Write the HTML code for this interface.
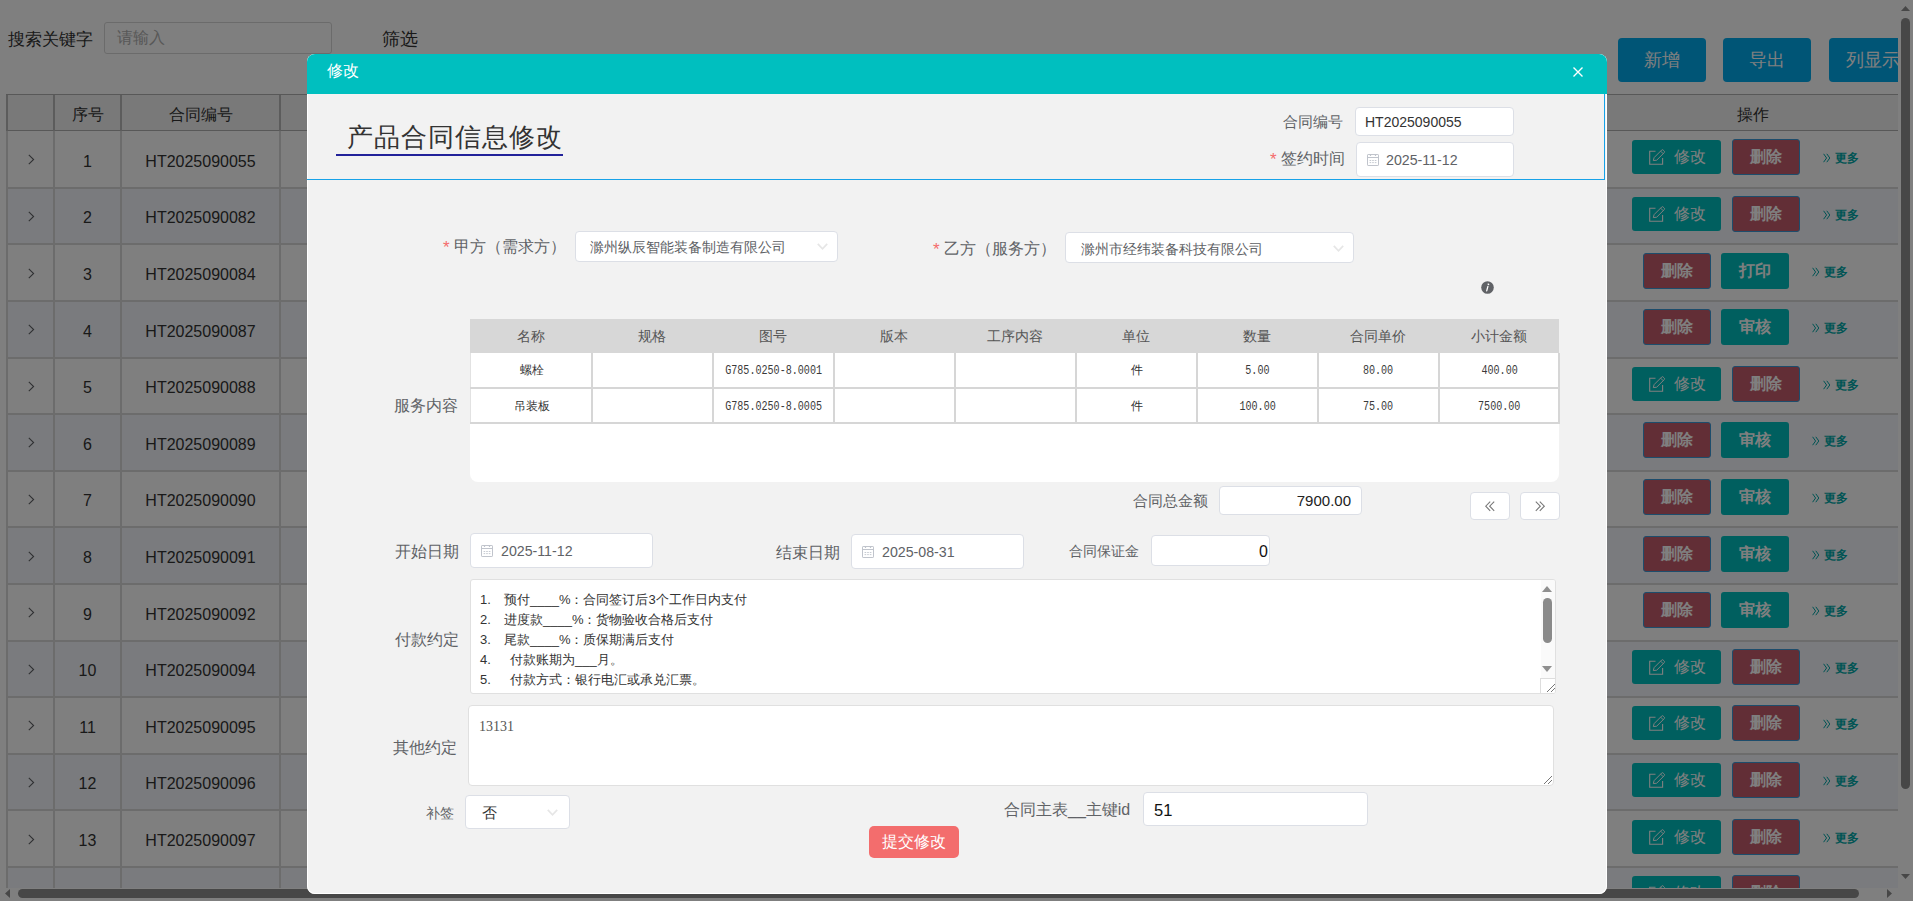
<!DOCTYPE html>
<html><head><meta charset="utf-8"><title>修改</title>
<style>
html,body{margin:0;padding:0;width:1913px;height:901px;overflow:hidden;background:#fff;font-family:"Liberation Sans",sans-serif;color:#333}
.a{position:absolute}
#page{position:absolute;left:0;top:0;width:1913px;height:901px;overflow:hidden;background:#fff}
.row{position:absolute;left:6px;width:1892px}
.cell{position:absolute;display:flex;align-items:center;justify-content:center;font-size:16px;color:#333}
.chev{font-size:20px;color:#666;margin-top:-3px}
.vl{position:absolute;top:95px;height:800px;width:2px;background:#d8d8d8}.vlh{position:absolute;top:95px;height:36px;width:2px;background:#b8b8b8}
.hl{position:absolute;left:6px;width:1892px;height:2px;background:#d8d8d8}
.btn{position:absolute;color:#fff;font-size:16px;text-align:center;border-radius:3px}
.teal{background:#00bfbf}
.del{background:#c45c6c;border:1px solid #3a9ad9;box-sizing:border-box;font-weight:bold}
.b{font-weight:bold}
.more{position:absolute;font-size:12px;line-height:18px;color:#00a8a8;white-space:nowrap}
.more b{margin-left:4px}.more svg{vertical-align:-1px}
.topbtn{position:absolute;top:38px;height:44px;line-height:45px;background:#01AAED;color:#fff;font-size:18px;text-align:center;border-radius:4px}
#shade{position:absolute;left:0;top:0;width:1913px;height:901px;background:rgba(0,0,0,.5)}
#modal{position:absolute;left:307px;top:54px;width:1300px;height:840px;background:#f2f2f2;border-radius:8px;overflow:hidden;box-shadow:0 0 0 1px #fff inset}
#mhead{position:absolute;left:0;top:0;width:1300px;height:40px;background:#00bfbf}
.lbl{position:absolute;font-size:15px;color:#606266;white-space:nowrap;line-height:20px}
.req{color:#f56c6c;margin-right:4px}
.inp{position:absolute;background:#fff;border:1px solid #dcdfe6;border-radius:4px;box-sizing:border-box;white-space:nowrap;overflow:hidden}
.inp .t{position:absolute;white-space:nowrap}
.cal{position:absolute;left:10px;top:10px}
.sth{position:absolute;top:319px;height:34px;line-height:34px;text-align:center;font-size:14px;color:#555;background:#d7d7d7}
.std{position:absolute;height:34px;line-height:34px;text-align:center;font-size:12px;color:#333}
.mono{font-family:"Liberation Mono",monospace;font-size:12px;color:#3a3a3a}.mono span{display:inline-block;transform:scaleX(0.84);position:relative;top:1px}
.ta{position:absolute;white-space:pre;font-size:13px;line-height:20px;color:#333}
</style></head><body>
<div id="page">
  <div class="a" style="left:8px;top:30px;font-size:17px;line-height:20px;color:#333">搜索关键字</div>
  <div class="a" style="left:104px;top:22px;width:228px;height:32px;box-sizing:border-box;border:1px solid #d6d6d6;border-radius:3px"></div>
  <div class="a" style="left:117px;top:29px;font-size:15.5px;line-height:18px;color:#b0b0b0">请输入</div>
  <div class="a" style="left:382px;top:29px;font-size:18px;line-height:20px;color:#333">筛选</div>
  <div class="topbtn" style="left:1618px;width:88px">新增</div>
  <div class="topbtn" style="left:1723px;width:88px">导出</div>
  <div class="a" style="left:1829px;top:38px;width:69px;height:44px;overflow:hidden"><div class="topbtn" style="left:0;top:0;width:88px;border-radius:4px 0 0 4px;text-align:left;text-indent:17px">列显示</div></div>
  <div class="a" style="left:6px;top:94px;width:1892px;height:37px;background:#f2f2f2;box-sizing:border-box;border-top:1.5px solid #b0b0b0;border-bottom:1.5px solid #b0b0b0"></div>
  <div class="cell" style="left:54px;width:67px;top:97px;height:36px">序号</div>
  <div class="cell" style="left:121px;width:159px;top:97px;height:36px">合同编号</div>
  <div class="cell" style="left:1607px;width:291px;top:97px;height:36px">操作</div>
  <div class="row" style="top:131.100px;height:56.600px;background:#ffffff"></div><div class="cell" style="left:6px;width:48px;top:131.100px;height:56.600px"><svg width="7" height="11" viewBox="0 0 7 11" style="margin-left:2px;margin-top:1px"><path d="M0.8 0.8L5.6 5.5L0.8 10.2" fill="none" stroke="#606266" stroke-width="1.1"/></svg></div><div class="cell" style="left:54px;width:67px;top:133.600px;height:56.600px">1</div><div class="cell" style="left:121px;width:159px;top:133.600px;height:56.600px">HT2025090055</div><div class="btn teal" style="left:1632px;top:140.40px;width:89px;height:34px"><svg width="18" height="17" viewBox="0 0 18 17" style="position:absolute;left:16px;top:9px"><path d="M7.5 2.3H1.7V15.2H14.6V9" fill="none" stroke="#fff" stroke-width="1.1"/><path d="M5.3 11.6L6.1 8.6L13.7 1Q14.4 0.3 15.1 1L16.3 2.2Q17 2.9 16.3 3.6L8.7 11.2Z" fill="none" stroke="#fff" stroke-width="1" stroke-linejoin="round"/><path d="M12.6 2.1L15.2 4.7" stroke="#fff" stroke-width="1"/></svg><span style="position:absolute;left:42px;top:0;line-height:34px">修改</span></div><div class="btn del" style="left:1732px;top:139.40px;width:68px;height:36px;line-height:34px">删除</div><div class="more" style="left:1823px;top:149.40px"><svg width="8" height="10" viewBox="0 0 8 10"><path d="M0.6 0.8L3.6 5L0.6 9.2M3.8 0.8L6.8 5L3.8 9.2" fill="none" stroke="#00a8a8" stroke-width="1"/></svg><b>更多</b></div><div class="row" style="top:187.700px;height:56.600px;background:#f4f7fc"></div><div class="cell" style="left:6px;width:48px;top:187.700px;height:56.600px"><svg width="7" height="11" viewBox="0 0 7 11" style="margin-left:2px;margin-top:1px"><path d="M0.8 0.8L5.6 5.5L0.8 10.2" fill="none" stroke="#606266" stroke-width="1.1"/></svg></div><div class="cell" style="left:54px;width:67px;top:190.200px;height:56.600px">2</div><div class="cell" style="left:121px;width:159px;top:190.200px;height:56.600px">HT2025090082</div><div class="btn teal" style="left:1632px;top:197.00px;width:89px;height:34px"><svg width="18" height="17" viewBox="0 0 18 17" style="position:absolute;left:16px;top:9px"><path d="M7.5 2.3H1.7V15.2H14.6V9" fill="none" stroke="#fff" stroke-width="1.1"/><path d="M5.3 11.6L6.1 8.6L13.7 1Q14.4 0.3 15.1 1L16.3 2.2Q17 2.9 16.3 3.6L8.7 11.2Z" fill="none" stroke="#fff" stroke-width="1" stroke-linejoin="round"/><path d="M12.6 2.1L15.2 4.7" stroke="#fff" stroke-width="1"/></svg><span style="position:absolute;left:42px;top:0;line-height:34px">修改</span></div><div class="btn del" style="left:1732px;top:196.00px;width:68px;height:36px;line-height:34px">删除</div><div class="more" style="left:1823px;top:206.00px"><svg width="8" height="10" viewBox="0 0 8 10"><path d="M0.6 0.8L3.6 5L0.6 9.2M3.8 0.8L6.8 5L3.8 9.2" fill="none" stroke="#00a8a8" stroke-width="1"/></svg><b>更多</b></div><div class="row" style="top:244.300px;height:56.600px;background:#ffffff"></div><div class="cell" style="left:6px;width:48px;top:244.300px;height:56.600px"><svg width="7" height="11" viewBox="0 0 7 11" style="margin-left:2px;margin-top:1px"><path d="M0.8 0.8L5.6 5.5L0.8 10.2" fill="none" stroke="#606266" stroke-width="1.1"/></svg></div><div class="cell" style="left:54px;width:67px;top:246.800px;height:56.600px">3</div><div class="cell" style="left:121px;width:159px;top:246.800px;height:56.600px">HT2025090084</div><div class="btn del" style="left:1643px;top:252.60px;width:68px;height:36px;line-height:34px">删除</div><div class="btn teal b" style="left:1721px;top:252.60px;width:68px;height:36px;line-height:36px">打印</div><div class="more" style="left:1812px;top:262.60px"><svg width="8" height="10" viewBox="0 0 8 10"><path d="M0.6 0.8L3.6 5L0.6 9.2M3.8 0.8L6.8 5L3.8 9.2" fill="none" stroke="#00a8a8" stroke-width="1"/></svg><b>更多</b></div><div class="row" style="top:300.900px;height:56.600px;background:#f4f7fc"></div><div class="cell" style="left:6px;width:48px;top:300.900px;height:56.600px"><svg width="7" height="11" viewBox="0 0 7 11" style="margin-left:2px;margin-top:1px"><path d="M0.8 0.8L5.6 5.5L0.8 10.2" fill="none" stroke="#606266" stroke-width="1.1"/></svg></div><div class="cell" style="left:54px;width:67px;top:303.400px;height:56.600px">4</div><div class="cell" style="left:121px;width:159px;top:303.400px;height:56.600px">HT2025090087</div><div class="btn del" style="left:1643px;top:309.20px;width:68px;height:36px;line-height:34px">删除</div><div class="btn teal b" style="left:1721px;top:309.20px;width:68px;height:36px;line-height:36px">审核</div><div class="more" style="left:1812px;top:319.20px"><svg width="8" height="10" viewBox="0 0 8 10"><path d="M0.6 0.8L3.6 5L0.6 9.2M3.8 0.8L6.8 5L3.8 9.2" fill="none" stroke="#00a8a8" stroke-width="1"/></svg><b>更多</b></div><div class="row" style="top:357.500px;height:56.600px;background:#ffffff"></div><div class="cell" style="left:6px;width:48px;top:357.500px;height:56.600px"><svg width="7" height="11" viewBox="0 0 7 11" style="margin-left:2px;margin-top:1px"><path d="M0.8 0.8L5.6 5.5L0.8 10.2" fill="none" stroke="#606266" stroke-width="1.1"/></svg></div><div class="cell" style="left:54px;width:67px;top:360.000px;height:56.600px">5</div><div class="cell" style="left:121px;width:159px;top:360.000px;height:56.600px">HT2025090088</div><div class="btn teal" style="left:1632px;top:366.80px;width:89px;height:34px"><svg width="18" height="17" viewBox="0 0 18 17" style="position:absolute;left:16px;top:9px"><path d="M7.5 2.3H1.7V15.2H14.6V9" fill="none" stroke="#fff" stroke-width="1.1"/><path d="M5.3 11.6L6.1 8.6L13.7 1Q14.4 0.3 15.1 1L16.3 2.2Q17 2.9 16.3 3.6L8.7 11.2Z" fill="none" stroke="#fff" stroke-width="1" stroke-linejoin="round"/><path d="M12.6 2.1L15.2 4.7" stroke="#fff" stroke-width="1"/></svg><span style="position:absolute;left:42px;top:0;line-height:34px">修改</span></div><div class="btn del" style="left:1732px;top:365.80px;width:68px;height:36px;line-height:34px">删除</div><div class="more" style="left:1823px;top:375.80px"><svg width="8" height="10" viewBox="0 0 8 10"><path d="M0.6 0.8L3.6 5L0.6 9.2M3.8 0.8L6.8 5L3.8 9.2" fill="none" stroke="#00a8a8" stroke-width="1"/></svg><b>更多</b></div><div class="row" style="top:414.100px;height:56.600px;background:#f4f7fc"></div><div class="cell" style="left:6px;width:48px;top:414.100px;height:56.600px"><svg width="7" height="11" viewBox="0 0 7 11" style="margin-left:2px;margin-top:1px"><path d="M0.8 0.8L5.6 5.5L0.8 10.2" fill="none" stroke="#606266" stroke-width="1.1"/></svg></div><div class="cell" style="left:54px;width:67px;top:416.600px;height:56.600px">6</div><div class="cell" style="left:121px;width:159px;top:416.600px;height:56.600px">HT2025090089</div><div class="btn del" style="left:1643px;top:422.40px;width:68px;height:36px;line-height:34px">删除</div><div class="btn teal b" style="left:1721px;top:422.40px;width:68px;height:36px;line-height:36px">审核</div><div class="more" style="left:1812px;top:432.40px"><svg width="8" height="10" viewBox="0 0 8 10"><path d="M0.6 0.8L3.6 5L0.6 9.2M3.8 0.8L6.8 5L3.8 9.2" fill="none" stroke="#00a8a8" stroke-width="1"/></svg><b>更多</b></div><div class="row" style="top:470.700px;height:56.600px;background:#ffffff"></div><div class="cell" style="left:6px;width:48px;top:470.700px;height:56.600px"><svg width="7" height="11" viewBox="0 0 7 11" style="margin-left:2px;margin-top:1px"><path d="M0.8 0.8L5.6 5.5L0.8 10.2" fill="none" stroke="#606266" stroke-width="1.1"/></svg></div><div class="cell" style="left:54px;width:67px;top:473.200px;height:56.600px">7</div><div class="cell" style="left:121px;width:159px;top:473.200px;height:56.600px">HT2025090090</div><div class="btn del" style="left:1643px;top:479.00px;width:68px;height:36px;line-height:34px">删除</div><div class="btn teal b" style="left:1721px;top:479.00px;width:68px;height:36px;line-height:36px">审核</div><div class="more" style="left:1812px;top:489.00px"><svg width="8" height="10" viewBox="0 0 8 10"><path d="M0.6 0.8L3.6 5L0.6 9.2M3.8 0.8L6.8 5L3.8 9.2" fill="none" stroke="#00a8a8" stroke-width="1"/></svg><b>更多</b></div><div class="row" style="top:527.300px;height:56.600px;background:#f4f7fc"></div><div class="cell" style="left:6px;width:48px;top:527.300px;height:56.600px"><svg width="7" height="11" viewBox="0 0 7 11" style="margin-left:2px;margin-top:1px"><path d="M0.8 0.8L5.6 5.5L0.8 10.2" fill="none" stroke="#606266" stroke-width="1.1"/></svg></div><div class="cell" style="left:54px;width:67px;top:529.800px;height:56.600px">8</div><div class="cell" style="left:121px;width:159px;top:529.800px;height:56.600px">HT2025090091</div><div class="btn del" style="left:1643px;top:535.60px;width:68px;height:36px;line-height:34px">删除</div><div class="btn teal b" style="left:1721px;top:535.60px;width:68px;height:36px;line-height:36px">审核</div><div class="more" style="left:1812px;top:545.60px"><svg width="8" height="10" viewBox="0 0 8 10"><path d="M0.6 0.8L3.6 5L0.6 9.2M3.8 0.8L6.8 5L3.8 9.2" fill="none" stroke="#00a8a8" stroke-width="1"/></svg><b>更多</b></div><div class="row" style="top:583.900px;height:56.600px;background:#ffffff"></div><div class="cell" style="left:6px;width:48px;top:583.900px;height:56.600px"><svg width="7" height="11" viewBox="0 0 7 11" style="margin-left:2px;margin-top:1px"><path d="M0.8 0.8L5.6 5.5L0.8 10.2" fill="none" stroke="#606266" stroke-width="1.1"/></svg></div><div class="cell" style="left:54px;width:67px;top:586.400px;height:56.600px">9</div><div class="cell" style="left:121px;width:159px;top:586.400px;height:56.600px">HT2025090092</div><div class="btn del" style="left:1643px;top:592.20px;width:68px;height:36px;line-height:34px">删除</div><div class="btn teal b" style="left:1721px;top:592.20px;width:68px;height:36px;line-height:36px">审核</div><div class="more" style="left:1812px;top:602.20px"><svg width="8" height="10" viewBox="0 0 8 10"><path d="M0.6 0.8L3.6 5L0.6 9.2M3.8 0.8L6.8 5L3.8 9.2" fill="none" stroke="#00a8a8" stroke-width="1"/></svg><b>更多</b></div><div class="row" style="top:640.500px;height:56.600px;background:#f4f7fc"></div><div class="cell" style="left:6px;width:48px;top:640.500px;height:56.600px"><svg width="7" height="11" viewBox="0 0 7 11" style="margin-left:2px;margin-top:1px"><path d="M0.8 0.8L5.6 5.5L0.8 10.2" fill="none" stroke="#606266" stroke-width="1.1"/></svg></div><div class="cell" style="left:54px;width:67px;top:643.000px;height:56.600px">10</div><div class="cell" style="left:121px;width:159px;top:643.000px;height:56.600px">HT2025090094</div><div class="btn teal" style="left:1632px;top:649.80px;width:89px;height:34px"><svg width="18" height="17" viewBox="0 0 18 17" style="position:absolute;left:16px;top:9px"><path d="M7.5 2.3H1.7V15.2H14.6V9" fill="none" stroke="#fff" stroke-width="1.1"/><path d="M5.3 11.6L6.1 8.6L13.7 1Q14.4 0.3 15.1 1L16.3 2.2Q17 2.9 16.3 3.6L8.7 11.2Z" fill="none" stroke="#fff" stroke-width="1" stroke-linejoin="round"/><path d="M12.6 2.1L15.2 4.7" stroke="#fff" stroke-width="1"/></svg><span style="position:absolute;left:42px;top:0;line-height:34px">修改</span></div><div class="btn del" style="left:1732px;top:648.80px;width:68px;height:36px;line-height:34px">删除</div><div class="more" style="left:1823px;top:658.80px"><svg width="8" height="10" viewBox="0 0 8 10"><path d="M0.6 0.8L3.6 5L0.6 9.2M3.8 0.8L6.8 5L3.8 9.2" fill="none" stroke="#00a8a8" stroke-width="1"/></svg><b>更多</b></div><div class="row" style="top:697.100px;height:56.600px;background:#ffffff"></div><div class="cell" style="left:6px;width:48px;top:697.100px;height:56.600px"><svg width="7" height="11" viewBox="0 0 7 11" style="margin-left:2px;margin-top:1px"><path d="M0.8 0.8L5.6 5.5L0.8 10.2" fill="none" stroke="#606266" stroke-width="1.1"/></svg></div><div class="cell" style="left:54px;width:67px;top:699.600px;height:56.600px">11</div><div class="cell" style="left:121px;width:159px;top:699.600px;height:56.600px">HT2025090095</div><div class="btn teal" style="left:1632px;top:706.40px;width:89px;height:34px"><svg width="18" height="17" viewBox="0 0 18 17" style="position:absolute;left:16px;top:9px"><path d="M7.5 2.3H1.7V15.2H14.6V9" fill="none" stroke="#fff" stroke-width="1.1"/><path d="M5.3 11.6L6.1 8.6L13.7 1Q14.4 0.3 15.1 1L16.3 2.2Q17 2.9 16.3 3.6L8.7 11.2Z" fill="none" stroke="#fff" stroke-width="1" stroke-linejoin="round"/><path d="M12.6 2.1L15.2 4.7" stroke="#fff" stroke-width="1"/></svg><span style="position:absolute;left:42px;top:0;line-height:34px">修改</span></div><div class="btn del" style="left:1732px;top:705.40px;width:68px;height:36px;line-height:34px">删除</div><div class="more" style="left:1823px;top:715.40px"><svg width="8" height="10" viewBox="0 0 8 10"><path d="M0.6 0.8L3.6 5L0.6 9.2M3.8 0.8L6.8 5L3.8 9.2" fill="none" stroke="#00a8a8" stroke-width="1"/></svg><b>更多</b></div><div class="row" style="top:753.700px;height:56.600px;background:#f4f7fc"></div><div class="cell" style="left:6px;width:48px;top:753.700px;height:56.600px"><svg width="7" height="11" viewBox="0 0 7 11" style="margin-left:2px;margin-top:1px"><path d="M0.8 0.8L5.6 5.5L0.8 10.2" fill="none" stroke="#606266" stroke-width="1.1"/></svg></div><div class="cell" style="left:54px;width:67px;top:756.200px;height:56.600px">12</div><div class="cell" style="left:121px;width:159px;top:756.200px;height:56.600px">HT2025090096</div><div class="btn teal" style="left:1632px;top:763.00px;width:89px;height:34px"><svg width="18" height="17" viewBox="0 0 18 17" style="position:absolute;left:16px;top:9px"><path d="M7.5 2.3H1.7V15.2H14.6V9" fill="none" stroke="#fff" stroke-width="1.1"/><path d="M5.3 11.6L6.1 8.6L13.7 1Q14.4 0.3 15.1 1L16.3 2.2Q17 2.9 16.3 3.6L8.7 11.2Z" fill="none" stroke="#fff" stroke-width="1" stroke-linejoin="round"/><path d="M12.6 2.1L15.2 4.7" stroke="#fff" stroke-width="1"/></svg><span style="position:absolute;left:42px;top:0;line-height:34px">修改</span></div><div class="btn del" style="left:1732px;top:762.00px;width:68px;height:36px;line-height:34px">删除</div><div class="more" style="left:1823px;top:772.00px"><svg width="8" height="10" viewBox="0 0 8 10"><path d="M0.6 0.8L3.6 5L0.6 9.2M3.8 0.8L6.8 5L3.8 9.2" fill="none" stroke="#00a8a8" stroke-width="1"/></svg><b>更多</b></div><div class="row" style="top:810.300px;height:56.600px;background:#ffffff"></div><div class="cell" style="left:6px;width:48px;top:810.300px;height:56.600px"><svg width="7" height="11" viewBox="0 0 7 11" style="margin-left:2px;margin-top:1px"><path d="M0.8 0.8L5.6 5.5L0.8 10.2" fill="none" stroke="#606266" stroke-width="1.1"/></svg></div><div class="cell" style="left:54px;width:67px;top:812.800px;height:56.600px">13</div><div class="cell" style="left:121px;width:159px;top:812.800px;height:56.600px">HT2025090097</div><div class="btn teal" style="left:1632px;top:819.60px;width:89px;height:34px"><svg width="18" height="17" viewBox="0 0 18 17" style="position:absolute;left:16px;top:9px"><path d="M7.5 2.3H1.7V15.2H14.6V9" fill="none" stroke="#fff" stroke-width="1.1"/><path d="M5.3 11.6L6.1 8.6L13.7 1Q14.4 0.3 15.1 1L16.3 2.2Q17 2.9 16.3 3.6L8.7 11.2Z" fill="none" stroke="#fff" stroke-width="1" stroke-linejoin="round"/><path d="M12.6 2.1L15.2 4.7" stroke="#fff" stroke-width="1"/></svg><span style="position:absolute;left:42px;top:0;line-height:34px">修改</span></div><div class="btn del" style="left:1732px;top:818.60px;width:68px;height:36px;line-height:34px">删除</div><div class="more" style="left:1823px;top:828.60px"><svg width="8" height="10" viewBox="0 0 8 10"><path d="M0.6 0.8L3.6 5L0.6 9.2M3.8 0.8L6.8 5L3.8 9.2" fill="none" stroke="#00a8a8" stroke-width="1"/></svg><b>更多</b></div><div class="row" style="top:866.900px;height:56.600px;background:#f4f7fc"></div><div class="cell" style="left:6px;width:48px;top:866.900px;height:56.600px"><svg width="7" height="11" viewBox="0 0 7 11" style="margin-left:2px;margin-top:1px"><path d="M0.8 0.8L5.6 5.5L0.8 10.2" fill="none" stroke="#606266" stroke-width="1.1"/></svg></div><div class="cell" style="left:54px;width:67px;top:869.400px;height:56.600px">14</div><div class="cell" style="left:121px;width:159px;top:869.400px;height:56.600px">HT2025090098</div><div class="btn teal" style="left:1632px;top:876.20px;width:89px;height:34px"><svg width="18" height="17" viewBox="0 0 18 17" style="position:absolute;left:16px;top:9px"><path d="M7.5 2.3H1.7V15.2H14.6V9" fill="none" stroke="#fff" stroke-width="1.1"/><path d="M5.3 11.6L6.1 8.6L13.7 1Q14.4 0.3 15.1 1L16.3 2.2Q17 2.9 16.3 3.6L8.7 11.2Z" fill="none" stroke="#fff" stroke-width="1" stroke-linejoin="round"/><path d="M12.6 2.1L15.2 4.7" stroke="#fff" stroke-width="1"/></svg><span style="position:absolute;left:42px;top:0;line-height:34px">修改</span></div><div class="btn del" style="left:1732px;top:875.20px;width:68px;height:36px;line-height:34px">删除</div><div class="more" style="left:1823px;top:885.20px"><svg width="8" height="10" viewBox="0 0 8 10"><path d="M0.6 0.8L3.6 5L0.6 9.2M3.8 0.8L6.8 5L3.8 9.2" fill="none" stroke="#00a8a8" stroke-width="1"/></svg><b>更多</b></div>
  <div class="vl" style="left:6px"></div><div class="vlh" style="left:6px"></div><div class="vl" style="left:53px"></div><div class="vlh" style="left:53px"></div><div class="vl" style="left:120px"></div><div class="vlh" style="left:120px"></div><div class="vl" style="left:279px"></div><div class="vlh" style="left:279px"></div>
  <div class="hl" style="top:186.700px"></div><div class="hl" style="top:243.300px"></div><div class="hl" style="top:299.900px"></div><div class="hl" style="top:356.500px"></div><div class="hl" style="top:413.100px"></div><div class="hl" style="top:469.700px"></div><div class="hl" style="top:526.300px"></div><div class="hl" style="top:582.900px"></div><div class="hl" style="top:639.500px"></div><div class="hl" style="top:696.100px"></div><div class="hl" style="top:752.700px"></div><div class="hl" style="top:809.300px"></div><div class="hl" style="top:865.900px"></div>
  <div class="a" style="left:1898px;top:0;width:15px;height:901px;background:#fff"></div>
  <div class="a" style="left:1901px;top:18px;width:9px;height:771px;border-radius:5px;background:#8f8f8f"></div>
  <svg class="a" style="left:1901px;top:6px" width="9" height="5"><path d="M0 5L4.5 0L9 5Z" fill="#8f8f8f"/></svg>
  <svg class="a" style="left:1901px;top:874px" width="9" height="5"><path d="M0 0L4.5 5L9 0Z" fill="#8f8f8f"/></svg>
  <div class="a" style="left:0;top:888px;width:1898px;height:13px;background:#fff"></div>
  <div class="a" style="left:18px;top:889px;width:1841px;height:9px;border-radius:5px;background:#8f8f8f"></div>
  <svg class="a" style="left:5px;top:889px" width="5" height="9"><path d="M5 0L0 4.5L5 9Z" fill="#8f8f8f"/></svg>
  <svg class="a" style="left:1887px;top:889px" width="5" height="9"><path d="M0 0L5 4.5L0 9Z" fill="#8f8f8f"/></svg>
</div>
<div id="shade"></div>

<div id="modal"><div id="mhead"></div>
  <div class="a" style="left:0;top:40px;width:1298px;height:86px;box-sizing:border-box;border-right:1px solid #17a2e8;border-bottom:1px solid #17a2e8"></div>
</div>
<div id="mc">
  <div class="a" style="left:327px;top:61px;font-size:16px;line-height:20px;color:#fff">修改</div>
  <svg class="a" style="left:1573px;top:67px" width="10" height="10"><path d="M0.5 0.5L9.5 9.5M9.5 0.5L0.5 9.5" stroke="#fff" stroke-width="1.4"/></svg>
  <div class="a" style="left:347px;top:123px;font-family:'Liberation Serif',serif;font-size:26px;line-height:30px;color:#333;letter-spacing:1px">产品合同信息修改</div>
  <div class="a" style="left:336px;top:154px;width:227px;height:2px;background:#22229a"></div>

  <div class="lbl" style="left:1283px;top:112px">合同编号</div>
  <div class="inp" style="left:1355px;top:107px;width:159px;height:29px"><span class="t" style="left:9px;top:5px;font-size:14px;line-height:18px;color:#333">HT2025090055</span></div>
  <div class="lbl" style="left:1270px;top:149px;font-size:16px"><span class="req" style="font-size:17px;vertical-align:-1px">*</span>签约时间</div>
  <div class="inp" style="left:1356px;top:141.5px;width:158px;height:35px"><svg class="cal" width="13" height="14" viewBox="0 0 13 14"><rect x="0.5" y="1.5" width="11" height="11" rx="0.6" fill="none" stroke="#c0c4cc" stroke-width="1"/><path d="M0.5 4.5H11.5" stroke="#c0c4cc"/><path d="M3.5 1V3M8.5 1V3" stroke="#c0c4cc" stroke-width="1.2"/><path d="M2.6 7.5h1.6M5.2 7.5h1.6M7.8 7.5h1.6M2.6 9.6h1.6M5.2 9.6h1.6M7.8 9.6h1.6" stroke="#c0c4cc" stroke-width="0.9"/></svg><span class="t" style="left:29px;top:8px;font-size:14.2px;line-height:18px;color:#606266">2025-11-12</span></div>

  <div class="lbl" style="left:443px;top:237px;font-size:16px"><span class="req" style="font-size:17px;vertical-align:-1px">*</span>甲方（需求方）</div>
  <div class="inp" style="left:575px;top:230.5px;width:263px;height:31px"><span class="t" style="left:14px;top:6px;font-size:14px;line-height:18px;color:#606266">滁州纵辰智能装备制造有限公司</span><span class="t" style="left:241px;top:11px"><svg width="12" height="8" viewBox="0 0 12 8" style="display:block"><path d="M0.8 0.8L5.5 5.8L10.2 0.8" fill="none" stroke="#e6e6e6" stroke-width="1.7"/></svg></span></div>
  <div class="lbl" style="left:933px;top:239px;font-size:16px"><span class="req" style="font-size:17px;vertical-align:-1px">*</span>乙方（服务方）</div>
  <div class="inp" style="left:1065px;top:232px;width:289px;height:31px"><span class="t" style="left:15px;top:7px;font-size:14px;line-height:18px;color:#606266">滁州市经纬装备科技有限公司</span><span class="t" style="left:267px;top:12px"><svg width="12" height="8" viewBox="0 0 12 8" style="display:block"><path d="M0.8 0.8L5.5 5.8L10.2 0.8" fill="none" stroke="#e6e6e6" stroke-width="1.7"/></svg></span></div>
  <svg class="a" style="left:1481px;top:281px" width="13" height="13" viewBox="0 0 13 13"><circle cx="6.5" cy="6.5" r="6.3" fill="#606266"/><path d="M7.2 3.2L7.6 3.4" stroke="#fff" stroke-width="1.5" fill="none" stroke-linecap="round"/><path d="M6.9 5.3L5.7 9.8" stroke="#fff" stroke-width="1.3" fill="none" stroke-linecap="round"/></svg>

  <div class="lbl" style="left:394px;top:396px;font-size:16px">服务内容</div>
  <div class="a" style="left:470px;top:319px;width:1089px;height:163px;background:#fff;border-radius:0 0 8px 8px"></div>
  <div class="sth" style="left:470px;width:121px">名称</div><div class="sth" style="left:591px;width:121px">规格</div><div class="sth" style="left:712px;width:121px">图号</div><div class="sth" style="left:833px;width:121px">版本</div><div class="sth" style="left:954px;width:121px">工序内容</div><div class="sth" style="left:1075px;width:121px">单位</div><div class="sth" style="left:1196px;width:121px">数量</div><div class="sth" style="left:1317px;width:121px">合同单价</div><div class="sth" style="left:1438px;width:121px">小计金额</div><div class="std" style="left:472px;top:353px;width:119px">螺栓</div><div class="std" style="left:593px;top:353px;width:119px"></div><div class="std mono" style="left:714px;top:353px;width:119px"><span>G785.0250-8.0001</span></div><div class="std" style="left:835px;top:353px;width:119px"></div><div class="std" style="left:956px;top:353px;width:119px"></div><div class="std" style="left:1077px;top:353px;width:119px">件</div><div class="std mono" style="left:1198px;top:353px;width:119px"><span>5.00</span></div><div class="std mono" style="left:1319px;top:353px;width:119px"><span>80.00</span></div><div class="std mono" style="left:1440px;top:353px;width:119px"><span>400.00</span></div><div class="std" style="left:472px;top:389px;width:119px">吊装板</div><div class="std" style="left:593px;top:389px;width:119px"></div><div class="std mono" style="left:714px;top:389px;width:119px"><span>G785.0250-8.0005</span></div><div class="std" style="left:835px;top:389px;width:119px"></div><div class="std" style="left:956px;top:389px;width:119px"></div><div class="std" style="left:1077px;top:389px;width:119px">件</div><div class="std mono" style="left:1198px;top:389px;width:119px"><span>100.00</span></div><div class="std mono" style="left:1319px;top:389px;width:119px"><span>75.00</span></div><div class="std mono" style="left:1440px;top:389px;width:119px"><span>7500.00</span></div><div class="a" style="left:591px;top:353px;width:2px;height:71px;background:#d6d6d6"></div><div class="a" style="left:712px;top:353px;width:2px;height:71px;background:#d6d6d6"></div><div class="a" style="left:833px;top:353px;width:2px;height:71px;background:#d6d6d6"></div><div class="a" style="left:954px;top:353px;width:2px;height:71px;background:#d6d6d6"></div><div class="a" style="left:1075px;top:353px;width:2px;height:71px;background:#d6d6d6"></div><div class="a" style="left:1196px;top:353px;width:2px;height:71px;background:#d6d6d6"></div><div class="a" style="left:1317px;top:353px;width:2px;height:71px;background:#d6d6d6"></div><div class="a" style="left:1438px;top:353px;width:2px;height:71px;background:#d6d6d6"></div><div class="a" style="left:1558px;top:353px;width:2px;height:71px;background:#d6d6d6"></div><div class="a" style="left:470px;top:353px;width:1px;height:71px;background:#e2e2e2"></div><div class="a" style="left:470px;top:387px;width:1090px;height:2px;background:#d6d6d6"></div><div class="a" style="left:470px;top:422px;width:1090px;height:2px;background:#d6d6d6"></div>

  <div class="lbl" style="left:1133px;top:491px">合同总金额</div>
  <div class="inp" style="left:1219px;top:486px;width:143px;height:29px"><span class="t" style="right:10px;top:5px;font-size:15px;line-height:18px;color:#222">7900.00</span></div>
  <div class="inp" style="left:1470px;top:492px;width:40px;height:28px"><svg class="a" style="left:14px;top:7.5px" width="11" height="11" viewBox="0 0 11 11"><path d="M5.2 0.6L0.7 5.2L5.2 9.8M9.2 0.6L4.7 5.2L9.2 9.8" fill="none" stroke="#777" stroke-width="1.1"/></svg></div>
  <div class="inp" style="left:1520px;top:492px;width:40px;height:28px"><svg class="a" style="left:13.5px;top:7.5px" width="11" height="11" viewBox="0 0 11 11"><path d="M0.8 0.6L5.3 5.2L0.8 9.8M4.8 0.6L9.3 5.2L4.8 9.8" fill="none" stroke="#777" stroke-width="1.1"/></svg></div>

  <div class="lbl" style="left:395px;top:542px;font-size:16px">开始日期</div>
  <div class="inp" style="left:470px;top:533px;width:183px;height:35px"><svg class="cal" width="13" height="14" viewBox="0 0 13 14"><rect x="0.5" y="1.5" width="11" height="11" rx="0.6" fill="none" stroke="#c0c4cc" stroke-width="1"/><path d="M0.5 4.5H11.5" stroke="#c0c4cc"/><path d="M3.5 1V3M8.5 1V3" stroke="#c0c4cc" stroke-width="1.2"/><path d="M2.6 7.5h1.6M5.2 7.5h1.6M7.8 7.5h1.6M2.6 9.6h1.6M5.2 9.6h1.6M7.8 9.6h1.6" stroke="#c0c4cc" stroke-width="0.9"/></svg><span class="t" style="left:30px;top:8px;font-size:14.2px;line-height:18px;color:#606266">2025-11-12</span></div>
  <div class="lbl" style="left:776px;top:543px;font-size:16px">结束日期</div>
  <div class="inp" style="left:851px;top:534px;width:173px;height:35px"><svg class="cal" width="13" height="14" viewBox="0 0 13 14"><rect x="0.5" y="1.5" width="11" height="11" rx="0.6" fill="none" stroke="#c0c4cc" stroke-width="1"/><path d="M0.5 4.5H11.5" stroke="#c0c4cc"/><path d="M3.5 1V3M8.5 1V3" stroke="#c0c4cc" stroke-width="1.2"/><path d="M2.6 7.5h1.6M5.2 7.5h1.6M7.8 7.5h1.6M2.6 9.6h1.6M5.2 9.6h1.6M7.8 9.6h1.6" stroke="#c0c4cc" stroke-width="0.9"/></svg><span class="t" style="left:30px;top:8px;font-size:14.2px;line-height:18px;color:#606266">2025-08-31</span></div>
  <div class="lbl" style="left:1069px;top:541px;font-size:14px">合同保证金</div>
  <div class="inp" style="left:1151px;top:535px;width:119px;height:31px"><span class="t" style="right:1px;top:7px;font-size:16px;line-height:18px;color:#111">0</span></div>

  <div class="lbl" style="left:395px;top:630px;font-size:16px">付款约定</div>
  <div class="inp" style="left:470px;top:579px;width:1086px;height:115px;border-color:#e0e0e0;border-radius:3px">
    <div class="ta" style="left:9px;top:10px">1.</div><div class="ta" style="left:33px;top:10px">预付____%：合同签订后3个工作日内支付</div><div class="ta" style="left:9px;top:30px">2.</div><div class="ta" style="left:33px;top:30px">进度款____%：货物验收合格后支付</div><div class="ta" style="left:9px;top:50px">3.</div><div class="ta" style="left:33px;top:50px">尾款____%：质保期满后支付</div><div class="ta" style="left:9px;top:70px">4.</div><div class="ta" style="left:39px;top:70px">付款账期为___月。</div><div class="ta" style="left:9px;top:90px">5.</div><div class="ta" style="left:39px;top:90px">付款方式：银行电汇或承兑汇票。</div>
    <div class="a" style="left:1070px;top:0;width:15px;height:113px;background:#fafafa"></div>
    <svg class="a" style="left:1071px;top:6px" width="10" height="6"><path d="M0 6L5 0L10 6Z" fill="#8f8f8f"/></svg>
    <div class="a" style="left:1072px;top:18px;width:9px;height:45px;border-radius:4.5px;background:#8a8a8a"></div>
    <svg class="a" style="left:1071px;top:86px" width="10" height="6"><path d="M0 0L5 6L10 0Z" fill="#8f8f8f"/></svg>
    <div class="a" style="left:1069px;top:98px;width:15px;height:15px;background:#fff;border-left:1px solid #ddd;border-top:1px solid #ddd;box-sizing:border-box"></div>
    <svg class="a" style="left:1076px;top:104px" width="8" height="8"><path d="M0 8L8 0M4 8L8 4" stroke="#777" stroke-width="1"/></svg>
  </div>

  <div class="lbl" style="left:393px;top:738px;font-size:16px">其他约定</div>
  <div class="inp" style="left:468px;top:705px;width:1086px;height:81px;border-color:#e0e0e0">
    <div class="ta" style="left:10px;top:11px;font-family:'Liberation Serif',serif;font-size:14px;color:#555">13131</div>
    <svg class="a" style="left:1075px;top:70px" width="8" height="8"><path d="M0 8L8 0M4 8L8 4" stroke="#777" stroke-width="1"/></svg>
  </div>

  <div class="lbl" style="left:426px;top:803px;font-size:14px">补签</div>
  <div class="inp" style="left:465px;top:795px;width:105px;height:34px"><span class="t" style="left:16px;top:8px;font-size:15px;line-height:18px;color:#333">否</span><span class="t" style="left:81px;top:13px"><svg width="12" height="8" viewBox="0 0 12 8" style="display:block"><path d="M0.8 0.8L5.5 5.8L10.2 0.8" fill="none" stroke="#e6e6e6" stroke-width="1.7"/></svg></span></div>
  <div class="lbl" style="left:1004px;top:800px;font-size:16px">合同主表__主键id</div>
  <div class="inp" style="left:1143px;top:792px;width:225px;height:34px"><span class="t" style="left:10px;top:8px;font-size:16.5px;line-height:18px;color:#111">51</span></div>
  <div class="a" style="left:869px;top:826px;width:90px;height:32px;background:#f36d6d;border-radius:5px;color:#fff;font-size:16px;line-height:32px;text-align:center">提交修改</div>
</div>
</body></html>
